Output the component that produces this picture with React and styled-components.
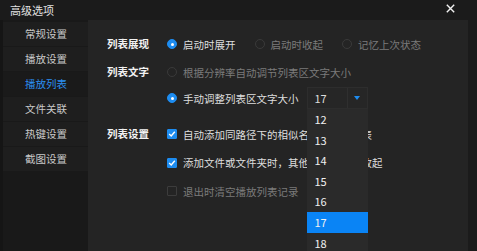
import React from 'react'
import styled, { createGlobalStyle } from 'styled-components'

const Global = createGlobalStyle`
  html, body { margin: 0; padding: 0; background: #1b1b1b; }
  body { font-family: "Noto Sans CJK SC", "Noto Sans", sans-serif; }
`

const Window = styled.div`
  width: 477px;
  height: 251px;
  display: flex;
  flex-direction: column;
  background: #1b1b1b;
  overflow: hidden;
`

const TitleBar = styled.div`
  height: 20px;
  flex: none;
  display: flex;
  align-items: center;
  justify-content: space-between;
  padding: 0 22px 0 10px;
  background: #1b1b1b;
  color: #e2e2e2;
  font-size: 11px;
`

const Close = styled.svg`
  width: 9px;
  height: 9px;
  margin-top: -3px;
`

const Body = styled.div`
  flex: 1;
  display: flex;
`

const Sidebar = styled.div`
  width: 85px;
  border-left: 3px solid #151515;
  background: #191919;
  padding-top: 2px;
  display: flex;
  flex-direction: column;
  gap: 1px;
`

const NavItem = styled.div`
  height: 24px;
  line-height: 24px;
  padding-left: 22px;
  font-size: 10.5px;
  background: ${p => (p.$active ? '#1a1a1a' : '#1e1e1e')};
  color: ${p => (p.$active ? '#2b8ef0' : '#c9c9c9')};
`

const Content = styled.div`
  width: 361px;
  padding: 11px 0 0 19px;
  background: #242424;
  display: flex;
  flex-direction: column;
`

const Section = styled.div`
  display: grid;
  grid-template-columns: 60px 1fr;
  row-gap: ${p => p.$gap || 0}px;
  margin-top: ${p => p.$top || 0}px;
`

const Label = styled.div`
  height: 26px;
  line-height: 26px;
  font-size: 10.5px;
  font-weight: bold;
  color: #f2f2f2;
`

const Line = styled.div`
  grid-column: 2;
  height: 26px;
  display: flex;
  align-items: center;
  gap: ${p => (p.$gap !== undefined ? p.$gap : 19)}px;
`

const Option = styled.div`
  display: flex;
  align-items: center;
  gap: 6px;
  font-size: 10.5px;
  white-space: nowrap;
  color: ${p => (p.$disabled ? '#7b7b7b' : '#dedede')};
`

const Radio = styled.span`
  width: 10px;
  height: 10px;
  box-sizing: border-box;
  border-radius: 50%;
  flex: none;
  display: flex;
  align-items: center;
  justify-content: center;
  background: ${p => (p.$on ? '#1d8cf0' : 'transparent')};
  border: 1px solid ${p => (p.$on ? '#1d8cf0' : '#3a3a3a')};
  &::after {
    content: '';
    width: 3px;
    height: 3px;
    border-radius: 50%;
    background: ${p => (p.$on ? '#ffffff' : 'transparent')};
  }
`

const Check = styled.span`
  width: 10px;
  height: 10px;
  box-sizing: border-box;
  flex: none;
  display: flex;
  align-items: center;
  justify-content: center;
  border-radius: 1px;
  background: ${p => (p.$on ? '#1d8cf0' : 'transparent')};
  border: 1px solid ${p => (p.$on ? '#1d8cf0' : '#3c3c3c')};
`

const Select = styled.div`
  position: relative;
  width: 61px;
  height: 22px;
  box-sizing: border-box;
  display: flex;
  background: #262626;
  border: 1px solid #2d2d2d;
  font-size: 11px;
  color: #dcdcdc;
`

const SelectValue = styled.div`
  flex: 1;
  padding-left: 7px;
  line-height: 20px;
  border-right: 1px solid #2f2f2f;
`

const SelectArrow = styled.div`
  width: 19px;
  display: flex;
  align-items: center;
  justify-content: center;
  &::after {
    content: '';
    border-left: 3.5px solid transparent;
    border-right: 3.5px solid transparent;
    border-top: 4px solid #1d8cf0;
  }
`

const Menu = styled.div`
  position: absolute;
  top: 21px;
  left: -1px;
  width: 61px;
  background: #2a2a2a;
  z-index: 2;
`

const MenuItem = styled.div`
  height: 20.6px;
  line-height: 20.6px;
  padding-left: 8px;
  font-size: 11px;
  color: #f0f0f0;
  background: ${p => (p.$active ? '#0a84f5' : 'transparent')};
`

const Tick = () => (
  <svg width="8" height="8" viewBox="0 0 8 8">
    <path d="M1.2 4.1 L3.2 6 L6.8 1.8" fill="none" stroke="#fff" strokeWidth="1.4" />
  </svg>
)

const navs = ['常规设置', '播放设置', '播放列表', '文件关联', '热键设置', '截图设置']
const sizes = [12, 13, 14, 15, 16, 17, 18, 19]

export default function App() {
  return (
    <Window>
      <Global />
      <TitleBar>
        <span>高级选项</span>
        <Close viewBox="0 0 9 9">
          <path d="M0.8 0.8 L8.2 8.2 M8.2 0.8 L0.8 8.2" stroke="#f2f2f2" strokeWidth="1.4" />
        </Close>
      </TitleBar>
      <Body>
        <Sidebar>
          {navs.map(n => (
            <NavItem key={n} $active={n === '播放列表'}>{n}</NavItem>
          ))}
        </Sidebar>
        <Content>
          <Section>
            <Label>列表展现</Label>
            <Line>
              <Option><Radio $on />启动时展开</Option>
              <Option $disabled><Radio />启动时收起</Option>
              <Option $disabled><Radio />记忆上次状态</Option>
            </Line>
          </Section>
          <Section $top={2}>
            <Label>列表文字</Label>
            <Line>
              <Option $disabled><Radio />根据分辨率自动调节列表区文字大小</Option>
            </Line>
            <Line $gap={8}>
              <Option><Radio $on />手动调整列表区文字大小</Option>
              <Select>
                <SelectValue>17</SelectValue>
                <SelectArrow />
                <Menu>
                  {sizes.map(s => (
                    <MenuItem key={s} $active={s === 17}>{s}</MenuItem>
                  ))}
                </Menu>
              </Select>
            </Line>
          </Section>
          <Section $top={10} $gap={2.5}>
            <Label>列表设置</Label>
            <Line>
              <Option><Check $on><Tick /></Check>自动添加同路径下的相似名称文件到列表</Option>
            </Line>
            <Line>
              <Option><Check $on><Tick /></Check>添加文件或文件夹时，其他文件夹自动收起</Option>
            </Line>
            <Line>
              <Option $disabled><Check />退出时清空播放列表记录</Option>
            </Line>
          </Section>
        </Content>
      </Body>
    </Window>
  )
}
